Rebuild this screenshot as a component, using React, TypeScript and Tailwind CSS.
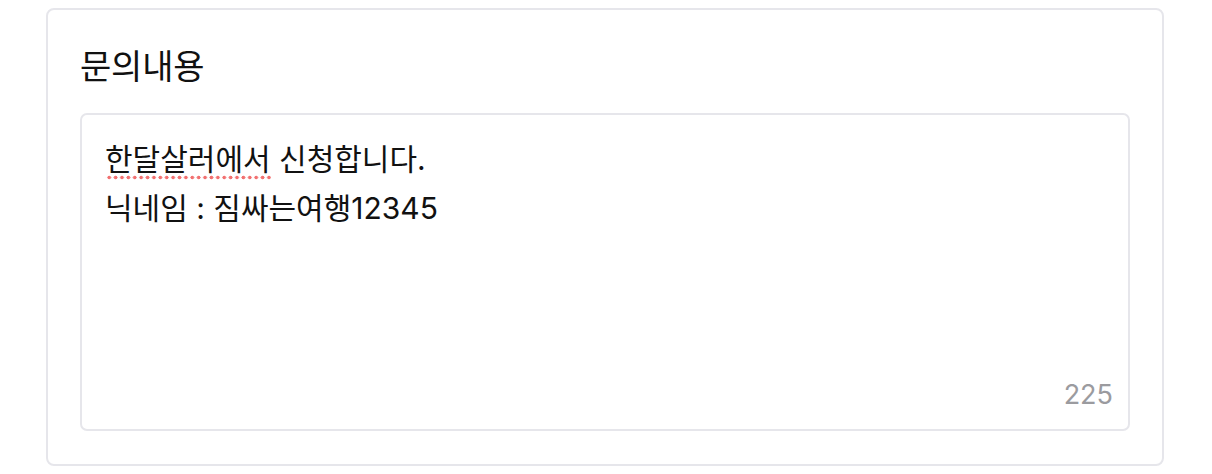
export default function App() {
  return (
    <div className="min-h-screen bg-white pt-[8px] font-['Inter','Noto_Sans_CJK_KR',sans-serif] text-[#111]">
      <section className="ml-[46px] w-[1118px] h-[458px] rounded-[8px] border-2 border-[#e6e6eb] px-[32px] pt-[37px] flex flex-col">
        <h2 className="text-[34px] leading-[40px] font-normal tracking-[-0.2px]">문의내용</h2>
        <div className="mt-[26px] h-[318px] rounded-[7px] border-2 border-[#e6e6eb] px-[23px] pt-[20px] flex flex-col">
          <div className="text-[30px] leading-[49px] flex-1">
            <p>
              <span className="bg-[radial-gradient(circle,#f27171_1.7px,transparent_2.1px)] bg-[length:6.4px_5px] bg-repeat-x bg-[position:1px_100%] pb-[3px]">
                한달살러에서
              </span>{" "}
              신청합니다.
            </p>
            <p>닉네임 : 짐싸는여행12345</p>
          </div>
          <div className="self-end -mr-[8px] pb-[14px] text-[27px] leading-[40px] text-[#9b9b9f]">
            225
          </div>
        </div>
      </section>
    </div>
  );
}
